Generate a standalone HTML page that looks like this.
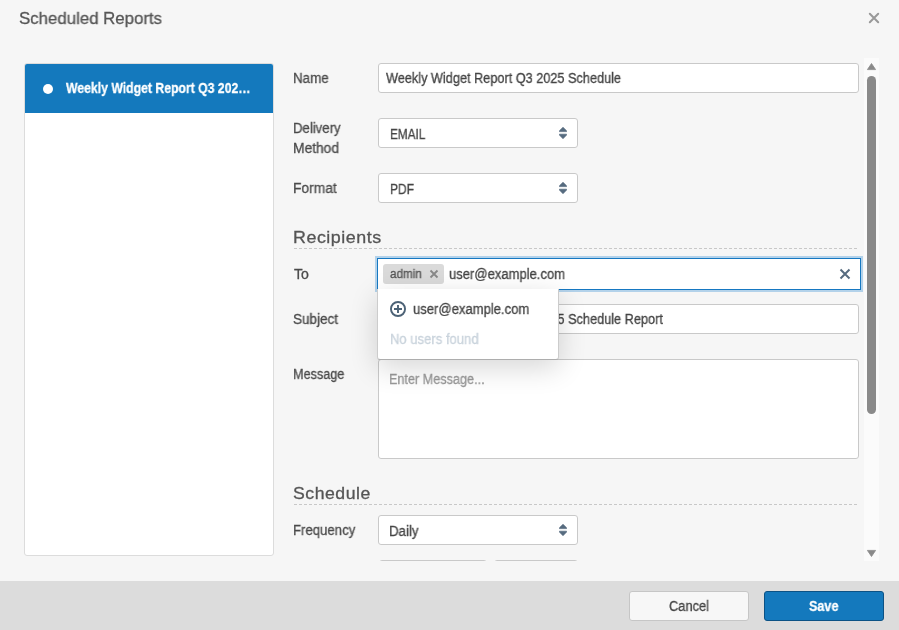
<!DOCTYPE html>
<html><head><meta charset="utf-8">
<style>
*{box-sizing:border-box;margin:0;padding:0}
html,body{width:899px;height:630px;overflow:hidden;background:#f6f6f6;font-family:"Liberation Sans",sans-serif;position:relative}
.a{position:absolute}
.t{position:absolute;white-space:nowrap;line-height:1;transform-origin:0 0;will-change:transform;-webkit-text-stroke:0.3px currentColor}
.inp{position:absolute;background:#fff;border:1px solid #c9c9c9;border-radius:3px}
.dash{position:absolute;height:1px;background-image:linear-gradient(to right,#c8c8c8 0,#c8c8c8 3px,transparent 3px);background-size:5px 1px}
</style></head><body>

<!-- title -->
<div class="t" style="left:18.51px;top:10px;font-size:17px;font-weight:normal;color:#555;transform:scaleX(0.9895)">Scheduled Reports</div>
<svg class="a" style="left:867px;top:11px" width="14" height="14" viewBox="0 0 14 14"><path d="M2.8 2.8L11.2 11.2M11.2 2.8L2.8 11.2" stroke="#999" stroke-width="2" stroke-linecap="round"/></svg>

<!-- left panel -->
<div class="a" style="left:24px;top:63px;width:250px;height:493px;background:#fff;border:1px solid #dcdcdc;border-radius:3px"></div>
<div class="a" style="left:25px;top:64px;width:248px;height:49px;background:#1479bd;border-radius:2px 2px 0 0"></div>
<div class="a" style="left:43px;top:84px;width:10px;height:10px;border-radius:50%;background:#fff"></div>
<div class="t" style="left:66.00px;top:81px;font-size:14px;font-weight:bold;color:#fff;transform:scaleX(0.8733)">Weekly Widget Report Q3 202…</div>

<!-- form area clip -->
<div class="a" style="left:0;top:58px;width:899px;height:503px;overflow:hidden">
 <div class="a" style="left:0;top:-58px;width:899px;height:630px">
  <div class="t" style="left:293.24px;top:71px;font-size:14px;font-weight:normal;color:#4a4a4a;transform:scaleX(0.9556)">Name</div>
  <div class="inp" style="left:378px;top:63px;width:481px;height:30px"></div>
  <div class="t" style="left:386.00px;top:71px;font-size:14px;font-weight:normal;color:#444;transform:scaleX(0.9078)">Weekly Widget Report Q3 2025 Schedule</div>

  <div class="t" style="left:293.26px;top:121px;font-size:14px;font-weight:normal;color:#4a4a4a;transform:scaleX(0.9420)">Delivery</div>
  <div class="t" style="left:293.21px;top:141px;font-size:14px;font-weight:normal;color:#4a4a4a;transform:scaleX(0.9867)">Method</div>
  <div class="inp" style="left:378px;top:118px;width:200px;height:30px"></div>
  <div class="t" style="left:389.66px;top:127px;font-size:14px;font-weight:normal;color:#444;transform:scaleX(0.8415)">EMAIL</div>
  <svg class="a" style="left:559px;top:126px" width="8" height="14" viewBox="0 0 8 14"><path d="M4 1.3L7.6 4.8V5.6H0.4V4.8Z M0.4 8.2H7.6V9L4 12.7L0.4 9Z" fill="#566b7f" stroke="#566b7f" stroke-width="0.7" stroke-linejoin="round"/></svg>

  <div class="t" style="left:293.21px;top:181px;font-size:14px;font-weight:normal;color:#4a4a4a;transform:scaleX(0.9860)">Format</div>
  <div class="inp" style="left:378px;top:173px;width:200px;height:30px"></div>
  <div class="t" style="left:389.64px;top:182px;font-size:14px;font-weight:normal;color:#444;transform:scaleX(0.8556)">PDF</div>
  <svg class="a" style="left:559px;top:181px" width="8" height="14" viewBox="0 0 8 14"><path d="M4 1.3L7.6 4.8V5.6H0.4V4.8Z M0.4 8.2H7.6V9L4 12.7L0.4 9Z" fill="#566b7f" stroke="#566b7f" stroke-width="0.7" stroke-linejoin="round"/></svg>

  <div class="t" style="left:293.25px;top:229px;font-size:17px;font-weight:normal;color:#555;letter-spacing:0.5px;transform:scaleX(1.0512)">Recipients</div>
  <div class="dash" style="left:294px;top:248px;width:565px"></div>

  <div class="t" style="left:294.20px;top:267px;font-size:14px;font-weight:normal;color:#4a4a4a;transform:scaleX(1.0071)">To</div>
  <div class="a" style="left:377px;top:258px;width:484px;height:32px;background:#fff;border:1px solid #1678c2;box-shadow:0 0 0 2px #b3d2ea"></div>
  <div class="a" style="left:383px;top:264px;width:61px;height:20px;background:#dadada;border-radius:3px"></div>
  <div class="t" style="left:389.70px;top:268px;font-size:12px;font-weight:normal;color:#555;transform:scaleX(0.9750)">admin</div>
  <svg class="a" style="left:429px;top:269px" width="10" height="10" viewBox="0 0 10 10"><path d="M1.5 1.5L8.5 8.5M8.5 1.5L1.5 8.5" stroke="#888" stroke-width="1.8"/></svg>
  <div class="t" style="left:448.87px;top:267px;font-size:14px;font-weight:normal;color:#444;transform:scaleX(0.9309)">user@example.com</div>
  <svg class="a" style="left:839px;top:268px" width="12" height="12" viewBox="0 0 12 12"><path d="M1.5 1.5L10.5 10.5M10.5 1.5L1.5 10.5" stroke="#566b7f" stroke-width="2"/></svg>

  <div class="t" style="left:293.23px;top:312px;font-size:14px;font-weight:normal;color:#4a4a4a;transform:scaleX(0.9652)">Subject</div>
  <div class="inp" style="left:378px;top:304px;width:481px;height:30px"></div>
  <div class="t" style="left:386.00px;top:312px;font-size:14px;font-weight:normal;color:#444;transform:scaleX(0.9082)">Weekly Widget Report Q3 2025 Schedule Report</div>

  <div class="t" style="left:293.30px;top:367px;font-size:14px;font-weight:normal;color:#4a4a4a;transform:scaleX(0.9036)">Message</div>
  <div class="inp" style="left:378px;top:359px;width:481px;height:100px"></div>
  <div class="t" style="left:388.70px;top:372px;font-size:14px;font-weight:normal;color:#999;transform:scaleX(0.9038)">Enter Message...</div>

  <div class="t" style="left:293.16px;top:485px;font-size:17px;font-weight:normal;color:#555;letter-spacing:0.5px;transform:scaleX(1.0384)">Schedule</div>
  <div class="dash" style="left:294px;top:504px;width:565px"></div>

  <div class="t" style="left:293.26px;top:523px;font-size:14px;font-weight:normal;color:#4a4a4a;transform:scaleX(0.9415)">Frequency</div>
  <div class="inp" style="left:378px;top:515px;width:200px;height:30px"></div>
  <div class="t" style="left:389.15px;top:524px;font-size:14px;font-weight:normal;color:#444;transform:scaleX(0.9500)">Daily</div>
  <svg class="a" style="left:559px;top:523px" width="8" height="14" viewBox="0 0 8 14"><path d="M4 1.3L7.6 4.8V5.6H0.4V4.8Z M0.4 8.2H7.6V9L4 12.7L0.4 9Z" fill="#566b7f" stroke="#566b7f" stroke-width="0.7" stroke-linejoin="round"/></svg>

  <div class="inp" style="left:379px;top:560px;width:108px;height:30px"></div>
  <div class="inp" style="left:494px;top:560px;width:84px;height:30px"></div>

  <!-- dropdown -->
  <div class="a" style="left:377px;top:289px;width:182px;height:71px;background:#fff;border:1px solid rgba(0,0,0,.2);border-bottom-color:rgba(0,0,0,.32);border-top:none;border-radius:0 0 3px 3px;box-shadow:0 8px 28px rgba(0,0,0,.16)"></div>
  <svg class="a" style="left:390px;top:301px" width="16" height="16" viewBox="0 0 16 16"><circle cx="8" cy="8" r="7.05" fill="none" stroke="#4c6276" stroke-width="1.9"/><path d="M8 4V12M4 8H12" stroke="#4c6276" stroke-width="1.9"/></svg>
  <div class="t" style="left:412.57px;top:302px;font-size:14px;font-weight:normal;color:#444;transform:scaleX(0.9325)">user@example.com</div>
  <div class="t" style="left:389.77px;top:332px;font-size:14px;font-weight:normal;color:#c9d3dc;transform:scaleX(0.9333)">No users found</div>
 </div>
</div>

<!-- scrollbar -->
<div class="a" style="left:864px;top:58px;width:15px;height:503px;background:#fbfbfb"></div>
<svg class="a" style="left:866px;top:62px" width="11" height="9" viewBox="0 0 11 9"><path d="M5.5 1.5L9.6 7.6H1.4Z" fill="#8a8a8a" stroke="#8a8a8a" stroke-width="0.8" stroke-linejoin="round"/></svg>
<div class="a" style="left:867px;top:76px;width:9px;height:338px;border-radius:4.5px;background:#8a8a8a"></div>
<svg class="a" style="left:866px;top:549px" width="11" height="9" viewBox="0 0 11 9"><path d="M1.4 1.4H9.6L5.5 7.5Z" fill="#8a8a8a" stroke="#8a8a8a" stroke-width="0.8" stroke-linejoin="round"/></svg>

<!-- footer -->
<div class="a" style="left:0;top:581px;width:899px;height:49px;background:#dcdcdc"></div>
<div class="a" style="left:629px;top:591px;width:120px;height:30px;background:#f7f7f7;border:1px solid #c6c6c6;border-radius:3px"></div>
<div class="t" style="left:669.08px;top:599px;font-size:14px;font-weight:normal;color:#444;transform:scaleX(0.9167)">Cancel</div>
<div class="a" style="left:764px;top:591px;width:120px;height:30px;background:#1479bd;border:1px solid #0c5285;border-radius:3px"></div>
<div class="t" style="left:809.00px;top:599px;font-size:14px;font-weight:bold;color:#fff;transform:scaleX(0.9000)">Save</div>

</body></html>
